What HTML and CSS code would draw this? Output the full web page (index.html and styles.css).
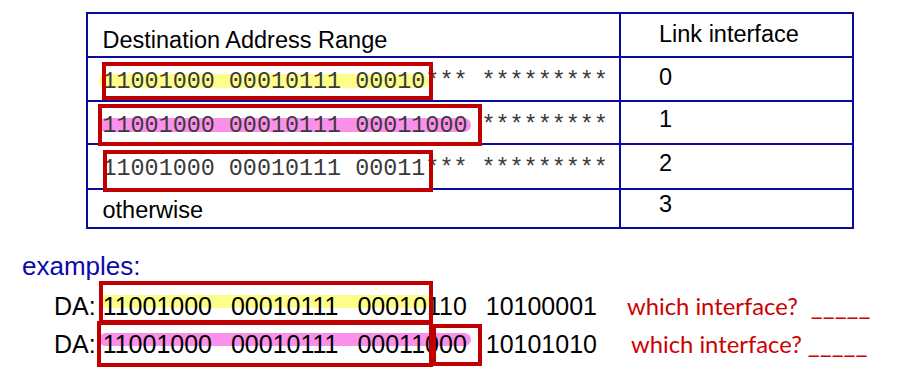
FILE: index.html
```html
<!DOCTYPE html>
<html>
<head>
<meta charset="utf-8">
<link rel="stylesheet" href="styles.css">
</head>
<body>
<div class="page">
  <div class="route-table">
    <div class="cell c1 head">Destination Address Range</div>
    <div class="cell c2 head-r">Link interface</div>

    <div class="cell c1 mono"><span class="hl yellow">11001000 00010111 00010</span>*** *********<span class="box box-r0"></span></div>
    <div class="cell c2 num n0">0</div>

    <div class="cell c1 mono"><span class="hl pink">11001000 00010111 00011000</span> *********<span class="box box-r1"></span></div>
    <div class="cell c2 num n1">1</div>

    <div class="cell c1 mono">11001000 00010111 00011*** *********<span class="box box-r2"></span></div>
    <div class="cell c2 num n2">2</div>

    <div class="cell c1 last other">otherwise</div>
    <div class="cell c2 last num n3">3</div>
  </div>

  <div class="examples">
    <div class="ex-title">examples:</div>
    <div class="da-line">DA: <span class="bits"><span class="hl-da yellow">11001000 00010111 00010</span>110 10100001</span><span class="q q1">which interface?</span><span class="blank b1">_____</span><span class="box box-a"></span></div>
    <div class="da-line">DA: <span class="bits"><span class="hl-da pink">11001000 00010111 00011000</span> 10101010</span><span class="q q2">which interface?</span><span class="blank b2">_____</span><span class="box box-b"></span><span class="box box-c"></span></div>
  </div>
</div>
</body>
</html>
```

FILE: styles.css
```css
html, body {
  margin: 0;
  padding: 0;
  background: #ffffff;
}

.page {
  font-family: "Liberation Sans", Arial, sans-serif;
  color: #000;
  width: 899px;
  height: 384px;
  overflow: hidden;
}

.route-table {
  display: grid;
  grid-template-columns: 533px 231px;
  grid-template-rows: 44px 44px 43px 45px 37px;
  width: max-content;
  margin: 12px 0 0 86px;
  border: 2px solid #0a0aa0;
}

.cell {
  box-sizing: border-box;
  position: relative;
  border-bottom: 2px solid #0a0aa0;
  font-size: 23.5px;
  line-height: 24px;
  white-space: pre;
}

.cell.last {
  border-bottom: none;
}

.c1 {
  border-right: 2px solid #0a0aa0;
  padding-left: 14.5px;
}

.c2 {
  padding-left: 38px;
}

.head { padding-top: 14px; }
.head-r { padding-top: 8px; }
.other { padding-top: 8px; }

.n0 { padding-top: 7px; }
.n1 { padding-top: 5px; }
.n2 { padding-top: 6px; }
.n3 { padding-top: 2px; }

.mono {
  font-family: "Liberation Mono", "Courier New", monospace;
  font-size: 23.4px;
  color: #3a3a3a;
  padding-top: 11.75px;
}

.hl {
  display: inline-block;
  height: 14px;
  line-height: 16.5px;
  border-radius: 7px;
  padding: 0 4px;
  margin: 0 -4px;
}

.yellow { background: #fdfd8a; }
.pink { background: #fb90ea; }

.box {
  position: absolute;
  box-sizing: border-box;
  border: 4px solid #c00000;
}

.box-r0 { left: 14px; top: 4px; width: 331px; height: 38px; }
.box-r1 { left: 10px; top: 2px; width: 384px; height: 42px; }
.box-r2 { left: 15px; top: 5px; width: 330px; height: 42px; }

.examples {
  margin-top: 22px;
}

.ex-title {
  font-size: 26px;
  line-height: 30px;
  color: #0a0aaa;
  padding-left: 22px;
}

.da-line {
  position: relative;
  font-size: 25px;
  line-height: 38px;
  height: 38px;
  padding-left: 54px;
  white-space: pre;
}

.ex-title + .da-line {
  margin-top: 6px;
}

.bits {
  word-spacing: 12px;
}

.hl-da {
  display: inline-block;
  height: 13px;
  line-height: 22.7px;
  border-radius: 7px;
  padding: 0 4px;
  margin: 0 -4px;
}

.q, .blank {
  font-family: Lato, "Open Sans", sans-serif;
  font-size: 23.8px;
  line-height: 1;
  color: #cc0000;
}

.blank {
  font-size: 26px;
}

.q1 { margin-left: 30px; }
.q2 { margin-left: 34px; }
.b1 { margin-left: 13px; }
.b2 { margin-left: 6px; }

.box-a { left: 99px; top: -6px; width: 334px; height: 43px; }
.box-b { left: 97px; top: -4px; width: 336px; height: 46px; }
.box-c { left: 432px; top: -1px; width: 50px; height: 42px; }
```
